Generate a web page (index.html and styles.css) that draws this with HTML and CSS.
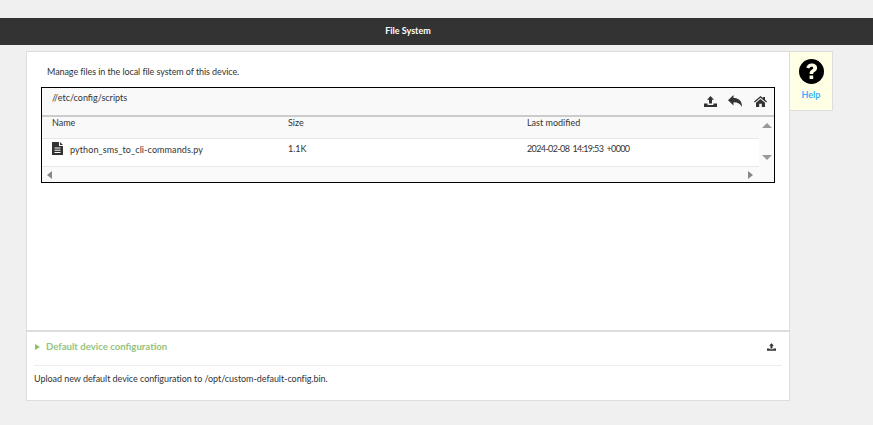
FILE: index.html
```html
<!DOCTYPE html>
<html lang="en">
<head>
<meta charset="utf-8">
<title>File System</title>
<link rel="stylesheet" href="styles.css">
</head>
<body>
<header class="topbar">File System</header>
<div class="layout">
  <main class="panel">
    <section class="intro">
      <p class="lead">Manage files in the local file system of this device.</p>
      <div class="browser">
        <div class="browser-head">
          <span class="path">//etc/config/scripts</span>
          <div class="tools">
            <svg class="tool tool-upload" viewBox="0 0 13 11"><path d="M6.500 0l3.500 3.800H8v3.700H5V3.800H3zM0 7.500h3.600v1.400h5.800V7.500H13V11H0z"/></svg>
            <svg class="tool tool-back" viewBox="0 0 14 12"><path d="M5.500 0v3C10.500 3 14 5.500 14 12 12.500 9 10 7.200 5.500 7.200v3.300L0 5.200z"/></svg>
            <svg class="tool tool-home" viewBox="0 0 13 11"><path d="M6.500 0l2.500 2.100V1h2v2.800L13 5.500l-.8.900L6.500 1.700.8 6.400 0 5.500zM2 6.700l4.500-3.700L11 6.700V11H7.800V7.700H5.200V11H2z"/></svg>
          </div>
        </div>
        <div class="browser-body">
          <div class="table">
            <div class="row row-head">
              <span>Name</span><span>Size</span><span>Last modified</span>
            </div>
            <div class="row row-file">
              <span class="file-name">
                <svg class="file-icon" viewBox="0 0 11 13"><path fill-rule="evenodd" d="M0 0h7v4h4v9H0zM8 0l3 3H8zM2.500 5.500v1h6v-1zM2.500 7.800v1h6v-1zM2.500 10v1h6v-1z"/></svg>
                <span class="file-label">python_sms_to_cli-commands.py</span>
              </span>
              <span>1.1K</span>
              <span class="file-date">2024-02-08 14:19:53 +0000</span>
            </div>
            <div class="hscroll">
              <span class="arrow arrow-left"></span>
              <span class="arrow arrow-right"></span>
            </div>
          </div>
          <div class="vscroll">
            <span class="arrow arrow-up"></span>
            <span class="arrow arrow-down"></span>
          </div>
        </div>
      </div>
    </section>
    <section class="config">
      <div class="config-head">
        <span class="config-caret"></span>
        <h2 class="config-title">Default device configuration</h2>
        <svg class="config-upload" viewBox="0 0 13 11"><path d="M6.500 0l3.500 3.800H8v3.700H5V3.800H3zM0 7.500h3.600v1.400h5.800V7.500H13V11H0z"/></svg>
      </div>
      <p class="config-text">Upload new default device configuration to /opt/custom-default-config.bin.</p>
    </section>
  </main>
  <aside class="help">
    <svg class="help-icon" viewBox="0 0 25 25"><circle cx="12.500" cy="12.500" r="12.500"/><path fill="#ffffe6" fill-rule="evenodd" d="M12.700 4.500c3.200 0 5.400 1.800 5.400 4.400 0 2-1.100 3-2.500 3.900-1 .7-1.400 1.100-1.400 2.200H10.600c0-2.300.8-3.300 2.100-4.200 1-.7 1.500-1.100 1.500-1.800 0-.8-.7-1.300-1.600-1.300-1.100 0-1.800.6-2.300 1.700L7.200 8.600c.9-2.500 2.800-4.100 5.500-4.100zM10.600 16.500h3.600v3.600h-3.600z"/></svg>
    <span class="help-label">Help</span>
  </aside>
</div>
</body>
</html>
```
FILE: styles.css
```css
* { box-sizing: border-box; }
html, body { margin: 0; height: 100%; }
body {
  background: #f0f0f0;
  color: #333;
  font-family: Lato, "Open Sans", sans-serif;
  font-size: 9px;
  line-height: 12px;
  padding-top: 18px;
  overflow: hidden;
}
.topbar {
  height: 27px;
  background: #333;
  color: #fff;
  font-weight: 700;
  line-height: 26px;
  text-align: center;
  padding-right: 57px;
}
.layout {
  display: flex;
  align-items: flex-start;
  margin: 6px 0 0 26px;
}
.panel {
  width: 764px;
  height: 350px;
  background: #fff;
  border: 1px solid #ddd;
  display: flex;
  flex-direction: column;
}
.intro {
  height: 280px;
  padding: 14px 14px 0;
  border-bottom: 2px solid #ddd;
}
.lead { margin: 0 0 9px 6px; letter-spacing: -0.08px; }
.browser {
  height: 96px;
  border: 1px solid #000;
  display: flex;
  flex-direction: column;
}
.browser-head {
  height: 29px;
  flex: none;
  background: #f9f9f9;
  border-bottom: 2px solid #ccc;
  display: flex;
  justify-content: space-between;
  padding: 4px 7px 0 10px;
}
.tools {
  display: flex;
  align-items: flex-start;
  gap: 11px;
  padding-top: 3px;
}
.tool { display: block; fill: #333; }
.tool-upload { width: 13px; height: 11px; margin-top: 1px; }
.tool-back { width: 14px; height: 12px; }
.tool-home { width: 13px; height: 11px; margin: 1px 0 0 1px; }
.browser-body { flex: 1; display: flex; min-height: 0; }
.table { flex: 1; min-width: 0; display: flex; flex-direction: column; }
.row {
  display: grid;
  grid-template-columns: 236px 239px 1fr;
  padding-left: 10px;
}
.row-head {
  height: 22px;
  background: #f9f9f9;
  border-bottom: 1px solid #e8e8e8;
}
.row-file {
  height: 28px;
  background: #fff;
  border-bottom: 1px solid #e8e8e8;
  padding-top: 3px;
}
.row-file > span:not(.file-name) { padding-top: 1px; }
.file-date { letter-spacing: -0.62px; word-spacing: 1.500px; }
.file-name { display: flex; align-items: flex-start; }
.file-icon { width: 11px; height: 13px; flex: none; fill: #333; }
.file-label { margin: 2px 0 0 7px; letter-spacing: 0.1px; }
.hscroll {
  flex: 1;
  background: #fafafa;
  display: flex;
  justify-content: space-between;
  align-items: center;
  padding: 0 6px 0 5px;
}
.vscroll {
  width: 15px;
  background: #fafafa;
  display: flex;
  flex-direction: column;
  justify-content: space-between;
  align-items: center;
  padding: 6px 0 22px;
}
.arrow { display: block; width: 0; height: 0; border-style: solid; border-color: transparent; }
.arrow-left { border-width: 4px 5px 4px 0; border-right-color: #888; }
.arrow-right { border-width: 4px 0 4px 5px; border-left-color: #888; }
.arrow-up { border-width: 0 5px 5px; border-bottom-color: #999; }
.arrow-down { border-width: 5px 5px 0; border-top-color: #999; }
.config { flex: 1; padding: 0 7px; }
.config-head {
  height: 34px;
  border-bottom: 1px solid #eee;
  display: flex;
  align-items: center;
  padding: 0 6px 4px 1px;
}
.config-caret {
  width: 0;
  height: 0;
  border-style: solid;
  border-width: 3px 0 3px 5px;
  border-color: transparent transparent transparent #8cc06c;
}
.config-title {
  margin: 0 0 0 6px;
  font-size: 9.600px;
  font-weight: 700;
  color: #93c47d;
  flex: 1;
}
.config-upload { width: 9px; height: 8px; fill: #333; }
.config-text { margin: 7px 0 0; letter-spacing: -0.05px; }
.help {
  width: 43px;
  height: 60px;
  background: #ffffe6;
  border: 1px solid #ddd;
  border-left: 0;
  display: flex;
  flex-direction: column;
  align-items: center;
  padding-top: 7px;
}
.help-icon { width: 25px; height: 25px; display: block; }
.help-label { margin-top: 5px; color: #35b0ff; font-weight: 700; }
```
